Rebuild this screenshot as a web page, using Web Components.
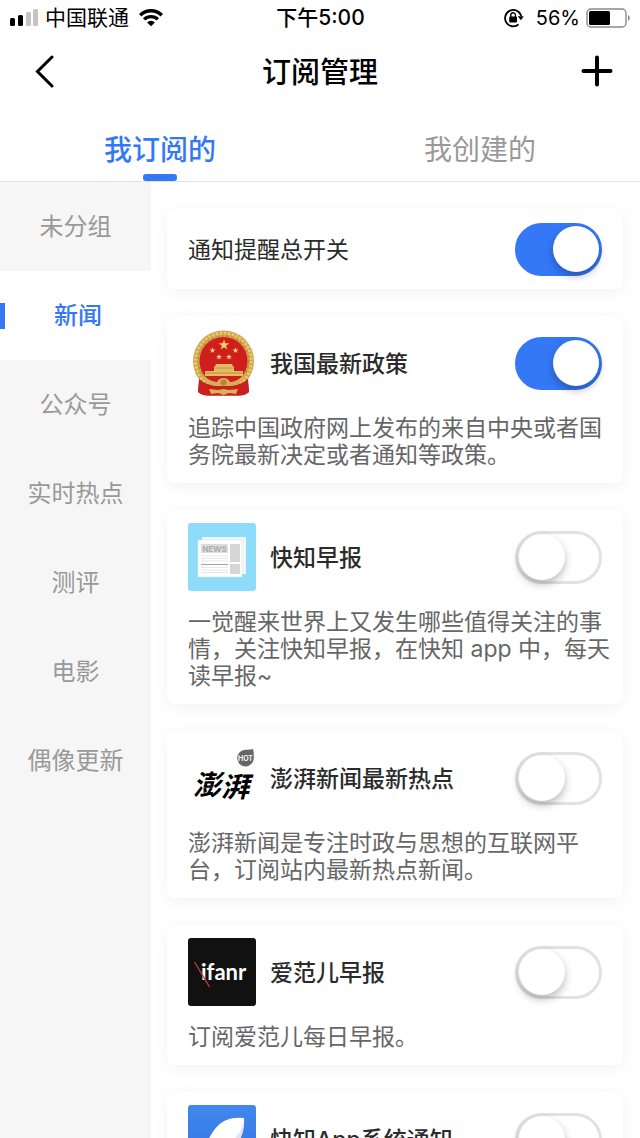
<!DOCTYPE html>
<html lang="zh-CN">
<head>
<meta charset="utf-8">
<meta name="viewport" content="width=device-width, initial-scale=1">
<title>订阅管理</title>
<style>
    :root {
        --brand: #3478f6;
        --fg: #2b2b2b;
        --muted: #999;
        --body: #666;
    }
    body { margin: 0; background: #fff; color: var(--fg);
        font: 400 23px/27px Inter, "Noto Sans CJK SC", sans-serif; }
</style>
</head>
<body>

<sub-app>
    <status-bar slot="top" carrier="中国联通" time="下午5:00" battery="56%"></status-bar>
    <nav-bar slot="top">订阅管理</nav-bar>
    <tab-bar slot="top">
        <tab-item active>我订阅的</tab-item>
        <tab-item>我创建的</tab-item>
    </tab-bar>

    <side-nav slot="side">
        <side-item>未分组</side-item>
        <side-item active>新闻</side-item>
        <side-item>公众号</side-item>
        <side-item>实时热点</side-item>
        <side-item>测评</side-item>
        <side-item>电影</side-item>
        <side-item>偶像更新</side-item>
    </side-nav>

    <feed-card plain on>通知提醒总开关</feed-card>
    <feed-card on>
        <feed-logo slot="logo" name="emblem"></feed-logo>
        我国最新政策
        <span slot="desc">追踪中国政府网上发布的来自中央或者国务院最新决定或者通知等政策。</span>
    </feed-card>
    <feed-card>
        <feed-logo slot="logo" name="news"></feed-logo>
        快知早报
        <span slot="desc">一觉醒来世界上又发生哪些值得关注的事情，关注快知早报，在快知 app 中，每天读早报~</span>
    </feed-card>
    <feed-card>
        <feed-logo slot="logo" name="paper"></feed-logo>
        澎湃新闻最新热点
        <span slot="desc">澎湃新闻是专注时政与思想的互联网平台，订阅站内最新热点新闻。</span>
    </feed-card>
    <feed-card>
        <feed-logo slot="logo" name="ifanr"></feed-logo>
        爱范儿早报
        <span slot="desc">订阅爱范儿每日早报。</span>
    </feed-card>
    <feed-card>
        <feed-logo slot="logo" name="feather"></feed-logo>
        快知App系统通知
    </feed-card>
</sub-app>

<script>
/** Small base: each element gives its markup once, it lands in an open root. */
class Base extends HTMLElement {
    connectedCallback() {
        if (this._init) return; this._init = true;
        this.attachShadow({ mode: 'open' }).innerHTML = this.render();
    }
}

/** <sub-app> — page frame: fixed top, group list on the left, scrolling cards. */
class SubApp extends Base {
    render() {
        return `<style>
            :host { display: flex; flex-direction: column; height: 100vh; overflow: hidden; }
            .body { flex: 1; min-height: 0; display: flex; }
            main { flex: 1; min-width: 0; overflow-y: auto; scrollbar-width: none;
                display: flex; flex-direction: column; gap: 27px; padding: 27px 17px 27px 16px; }
            ::slotted(feed-card) { flex-shrink: 0; }
        </style>
        <header><slot name="top"></slot></header>
        <div class="body"><slot name="side"></slot><main><slot></slot></main></div>`;
    }
}

/** <status-bar> — signal, carrier, clock and battery. */
class StatusBar extends Base {
    render() {
        const a = n => this.getAttribute(n);
        return `<style>
            :host { display: grid; grid-template-columns: 1fr auto 1fr; align-items: center;
                height: 36px; padding: 0 9px 0 10px; color: #000; font-size: 21px; line-height: 34px; }
            div { display: flex; align-items: center; }
            .l { gap: 6px; }
            .r { gap: 6px; justify-content: flex-end; font-size: 20px; }
            .t { font-weight: 500; }
            .wifi { margin-left: 4px; }
            .lock { margin-right: 6px; }
            svg { display: block; }
        </style>
        <div class="l">
            <svg width="29" height="18" viewBox="0 0 29 18" aria-hidden="true">
                <rect y="9" width="5" height="8" rx="1.5"/><rect x="8" y="6" width="5" height="11" rx="1.5"/>
                <g fill="#c4c4c4"><rect x="16" y="3" width="5" height="14" rx="1.5"/><rect x="23" width="5" height="17" rx="1.5"/></g>
            </svg>
            <span>${a('carrier')}</span>
            <svg class="wifi" width="24" height="18" viewBox="0 0 24 18" aria-hidden="true">
                <g fill="none" stroke="#000" stroke-width="3.4"><path d="M1.2 6.2a15.3 15.3 0 0 1 21.6 0"/><path d="M5.2 10.4a9.6 9.6 0 0 1 13.6 0"/></g>
                <path d="M12 17.2l-3.9-3.8a5.5 5.5 0 0 1 7.8 0z"/>
            </svg>
        </div>
        <span class="t">${a('time')}</span>
        <div class="r">
            <svg class="lock" width="20" height="20" viewBox="0 0 20 20" aria-hidden="true">
                <path d="M14.6 16.4A8.2 8.2 0 1 1 17.2 8" fill="none" stroke="#000" stroke-width="1.8"/>
                <path d="M13.8 8.2h6l-2.9 4z"/>
                <rect x="5.2" y="8.4" width="7.8" height="6" rx="1"/>
                <path d="M6.8 9V7a2.3 2.3 0 0 1 4.6 0V9" fill="none" stroke="#000" stroke-width="1.4"/>
            </svg>
            <span>${a('battery')}</span>
            <svg width="45" height="20" viewBox="0 0 45 20" aria-hidden="true">
                <rect x="1" y="1" width="39" height="18" rx="4" fill="none" stroke="#8a8a8a" stroke-width="1.4"/>
                <rect x="3" y="3" width="21" height="14" rx="1.5"/>
                <path d="M42 7a3.4 3.4 0 0 1 0 6z" fill="#8a8a8a"/>
            </svg>
        </div>`;
    }
}

/** <nav-bar> — back, title, add. */
class NavBar extends Base {
    render() {
        return `<style>
            :host { display: flex; align-items: center; justify-content: space-between;
                height: 72px; padding: 0 23px; color: #000; }
            h1 { margin: 0; padding-top: 2px; font-size: 29px; font-weight: 500; line-height: 40px; }
            button { display: grid; place-items: center; width: 40px; height: 40px; padding: 0;
                border: 0; background: none; color: inherit; cursor: pointer; }
            svg { fill: none; stroke: currentColor; stroke-linecap: round; }
        </style>
        <button type="button" aria-label="返回"><svg width="34" height="34" viewBox="0 0 34 34" stroke-width="3"><path d="M26 2L11.500 16.500L26 31"/></svg></button>
        <h1><slot></slot></h1>
        <button type="button" aria-label="添加"><svg width="34" height="34" viewBox="0 0 34 34" stroke-width="4"><path d="M3.500 16H30.500M17 2.500V29.500"/></svg></button>`;
    }
}

class TabBar extends Base {
    render() {
        return `<style>
            :host { display: flex; padding-top: 22px; border-bottom: 1px solid #e3e3e6; }
            ::slotted(*) { flex: 1; }
        </style><slot></slot>`;
    }
}

class TabItem extends Base {
    render() {
        return `<style>
            :host { display: flex; justify-content: center; }
            button { display: flex; flex-direction: column; align-items: center; gap: 4px;
                padding: 0; border: 0; background: none; cursor: pointer;
                font: inherit; font-size: 28px; line-height: 40px; color: var(--muted); }
            i { width: 34px; height: 7px; border-radius: 3px; }
            :host([active]) button { color: var(--brand); font-weight: 500; }
            :host([active]) i { background: var(--brand); }
        </style><button type="button"><slot></slot><i></i></button>`;
    }
}

class SideNav extends Base {
    render() {
        return `<style>
            :host { display: block; width: 151px; flex-shrink: 0; background: #f6f6f6; }
        </style><nav><slot></slot></nav>`;
    }
}

/** <side-item active> — one group; the active one has a mark on its left edge. */
class SideItem extends Base {
    render() {
        return `<style>
            :host { display: block; }
            a { display: flex; align-items: center; height: 89px; font-size: 24px;
                color: var(--muted); text-decoration: none; }
            span { flex: 1; text-align: center; }
            :host([active]) a { background: #fff; color: var(--brand); font-weight: 500; }
            :host([active]) a::before { content: ""; width: 5px; height: 26px; background: var(--brand); }
        </style><a href="#"><span><slot></slot></span></a>`;
    }
}

/**
 * <feed-card on plain> — a subscription with its switch.
 * Default slot is the title (it labels the switch), "logo" and "desc" are optional.
 */
class FeedCard extends Base {
    render() {
        const plain = this.hasAttribute('plain');
        return `<style>
            :host { display: block; box-sizing: border-box; padding: 13px 21px 14px; border-radius: 8px;
                background: #fff; box-shadow: 0 3px 16px rgba(0, 0, 0, .06); }
            :host([plain]) { padding: 6px 21px; }
            .row { display: flex; align-items: center; gap: 14px; min-height: 68px; }
            label { flex: 1; padding-top: 2px; font-weight: 500; }
            :host([plain]) label { font-weight: 400; }
            input { appearance: none; display: flex; align-items: center; box-sizing: border-box;
                width: 87px; height: 53px; margin: 0; padding: 0 0 0 1px; flex-shrink: 0;
                border: 3px solid #e2e2e2; border-radius: 27px; background: #fff; cursor: pointer; }
            input::before { content: ""; width: 46px; height: 46px; border-radius: 50%;
                background: #fff; box-shadow: 0 4px 9px rgba(0, 0, 0, .28); }
            input:checked { justify-content: flex-end; border-color: var(--brand); background: var(--brand); }
            p { margin: 18px -9px 0 0; color: var(--body); }
        </style>
        <div class="row">
            <slot name="logo"></slot>
            <label for="sw"><slot></slot></label>
            <input id="sw" type="checkbox" role="switch"${this.hasAttribute('on') ? ' checked' : ''}>
        </div>
        ${plain || !this.querySelector('[slot=desc]') ? '' : '<p><slot name="desc"></slot></p>'}`;
    }
}

// five-pointed star, centred on x,y
const star = (x, y, r) => {
    const pts = [];
    for (let i = 0; i < 10; i++) {
        const k = i % 2 ? r * 0.4 : r, t = Math.PI * (i / 5 - 0.5);
        pts.push((x + k * Math.cos(t)).toFixed(1) + ',' + (y + k * Math.sin(t)).toFixed(1));
    }
    return `<polygon points="${pts.join(' ')}"/>`;
};

const LOGOS = {
    emblem: `
        <path d="M12 44L10 63q5 4 11 3.500h29q6 .5 11-3.500L59 44z" fill="#c8201c"/>
        <circle cx="35.500" cy="32" r="30.500" fill="#d0a24c"/>
        <circle cx="35.500" cy="32" r="28" fill="none" stroke="#e8c873" stroke-width="3" stroke-dasharray="2.500 1.500"/>
        <circle cx="35.500" cy="32" r="25" fill="none" stroke="#b98436" stroke-width="1.200" stroke-dasharray="2 3"/>
        <circle cx="35.500" cy="32" r="24" fill="#cf1f1c"/>
        <g fill="#eed06f">${star(36, 16, 5.500)}${star(24.500, 21.500, 3.200)}${star(47.500, 21.500, 3.200)}${star(31, 28, 3.200)}${star(41, 28, 3.200)}</g>
        <path d="M28 35h16l1 2.500h1V42h9v5H17v-5h9v-4.500h1z" fill="#e6bb68"/>
        <path d="M17 44h38M27 39h18" stroke="#bd8738" stroke-width=".8"/>
        <path d="M11 50q7 6 15 6h19q8 0 15-6l1 13q-5 4-11 3.500H21q-6 .5-11-3.500z" fill="#c8201c"/>
        <path d="M15 46q7 7 14 7 2-4 6.500-4t6.500 4q7 0 14-7l-1 5q-5 6-13 6H29q-8 0-13-6z" fill="#d9ae58"/>
        <circle cx="35.500" cy="53.500" r="3" fill="#b98634"/>
        <path d="M21 60l9 1 5.500-1 5.500 1 9-1-2 5-7-1-5.500 2-5.500-2-7 1z" fill="#dcb05a"/>`,
    news: `
        <rect width="68" height="68" rx="3" fill="#8cdcfa"/>
        <path d="M14 14h44v37H14z" fill="#f3f6f7"/>
        <path d="M10 17h44v37H10z" fill="#fff"/>
        <path d="M10 17h44v37H10z" fill="none" stroke="#dde5e8" stroke-width=".6"/>
        <rect x="13" y="21" width="27" height="9" fill="#dcdcdc"/>
        <text x="26.500" y="28.500" font-size="8" font-weight="600" text-anchor="middle" fill="#a9a9a9">NEWS</text>
        <path d="M42 21h10v18H42zM42 41h10v10H42z" fill="#d6d6d6"/>
        <path d="M13 41.500h27" stroke="#a8a8a8" stroke-width="1.200"/>
        <path d="M13 33h27M13 35.500h27M13 38h27M13 44.500h27M13 47h27M13 49.500h27" stroke="#e4e4e4" stroke-width=".9"/>`,
    paper: `
        <text x="5" y="51" font-size="28" font-weight="700" font-style="italic" fill="#000">澎</text>
        <text x="33" y="53" font-size="28" font-weight="700" font-style="italic" fill="#000">湃</text>
        <path d="M65 5q1 3 .8 8.500A8.300 8.300 0 1 1 57.500 5.800Q63 6 65 5z" fill="#666"/>
        <text x="57.500" y="17" font-size="7" font-weight="600" text-anchor="middle" fill="#fff">HOT</text>`,
    ifanr: `
        <rect width="68" height="68" rx="3" fill="#111"/>
        <text x="13" y="42" font-family="Lato, sans-serif" font-size="22" font-weight="700" fill="#fff">ifanr</text>
        <path d="M6.500 24L21.500 49" stroke="#c8383a" stroke-width="1.400"/>`,
    feather: `
        <defs><linearGradient id="g" x2="0" y2="1"><stop stop-color="#4288ee"/><stop offset="1" stop-color="#2f6fdf"/></linearGradient></defs>
        <rect width="68" height="68" rx="3" fill="url(#g)"/>
        <path d="M56 13Q41 12 33 18Q21 27 14 52Q36 52 47 40Q57 29 56 13z" fill="#fff"/>
        <path d="M56 18q0 14-10 24T14 52q32-8 42-34z" fill="#e3e6ec"/>`
};

class FeedLogo extends Base {
    render() {
        return `<style>
            :host { display: block; width: 68px; height: 68px; flex-shrink: 0; }
            svg { display: block; }
        </style><svg width="68" height="68" viewBox="0 0 68 68" aria-hidden="true">${LOGOS[this.getAttribute('name')]}</svg>`;
    }
}

customElements.define('sub-app', SubApp);
customElements.define('status-bar', StatusBar);
customElements.define('nav-bar', NavBar);
customElements.define('tab-bar', TabBar);
customElements.define('tab-item', TabItem);
customElements.define('side-nav', SideNav);
customElements.define('side-item', SideItem);
customElements.define('feed-card', FeedCard);
customElements.define('feed-logo', FeedLogo);
</script>
</body>
</html>
